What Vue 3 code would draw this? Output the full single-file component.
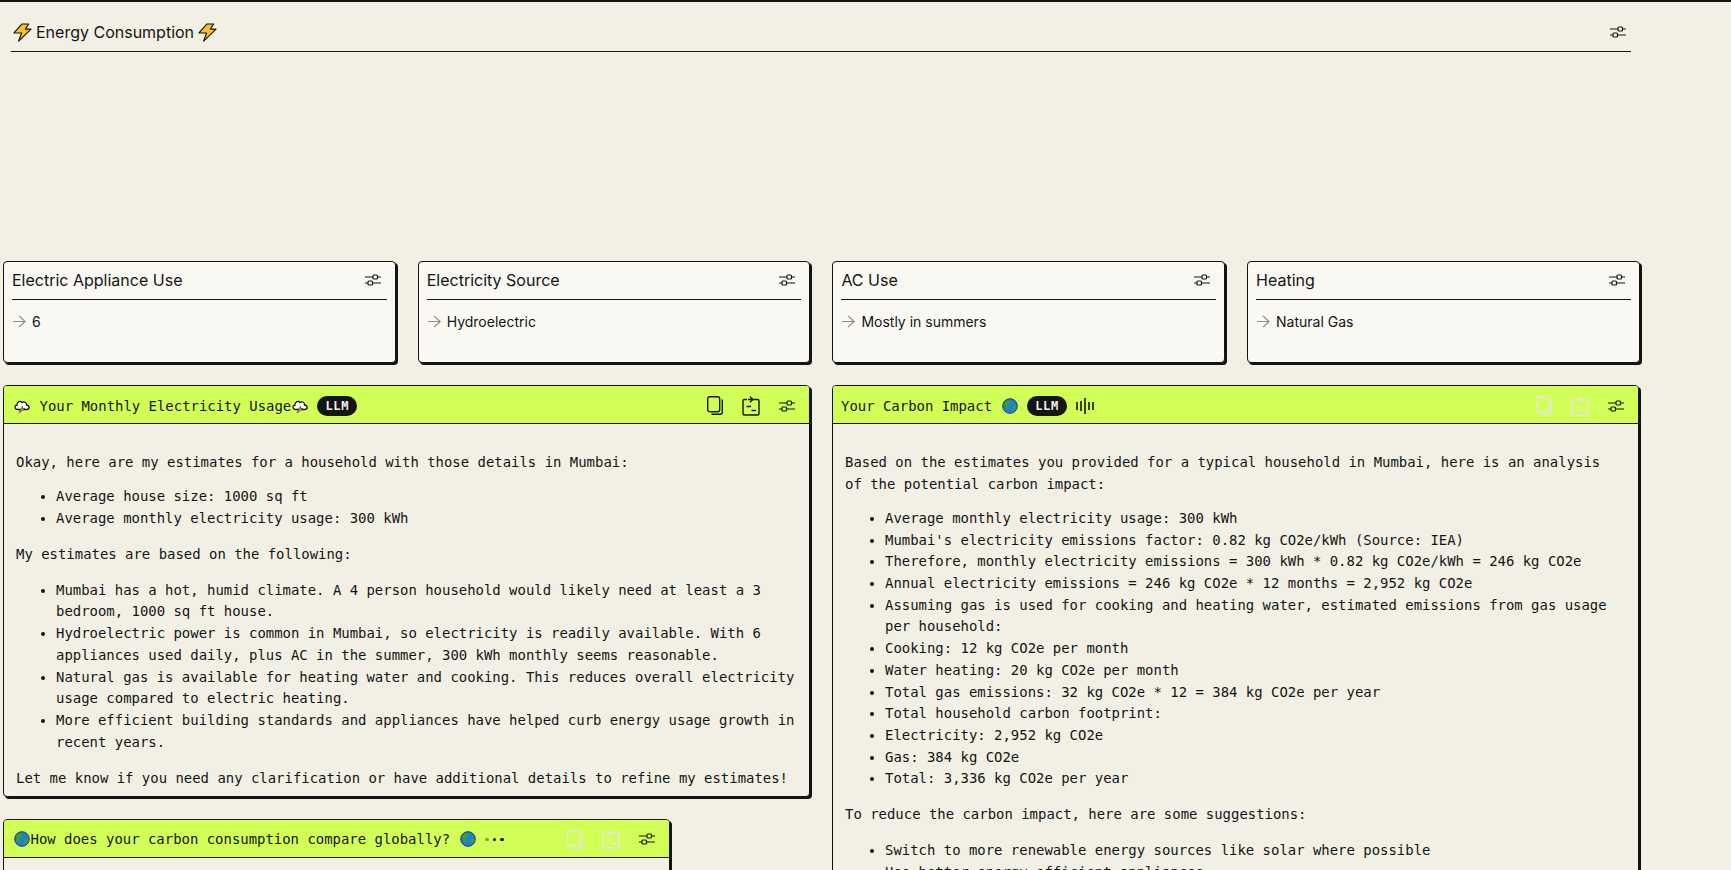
<script setup>
const cards = [
  { title: 'Electric Appliance Use', value: '6' },
  { title: 'Electricity Source', value: 'Hydroelectric' },
  { title: 'AC Use', value: 'Mostly in summers' },
  { title: 'Heating', value: 'Natural Gas' },
]
const carbonList = [
  'Average monthly electricity usage: 300 kWh',
  "Mumbai's electricity emissions factor: 0.82 kg CO2e/kWh (Source: IEA)",
  'Therefore, monthly electricity emissions = 300 kWh * 0.82 kg CO2e/kWh = 246 kg CO2e',
  'Annual electricity emissions = 246 kg CO2e * 12 months = 2,952 kg CO2e',
  'Assuming gas is used for cooking and heating water, estimated emissions from gas usage per household:',
  'Cooking: 12 kg CO2e per month',
  'Water heating: 20 kg CO2e per month',
  'Total gas emissions: 32 kg CO2e * 12 = 384 kg CO2e per year',
  'Total household carbon footprint:',
  'Electricity: 2,952 kg CO2e',
  'Gas: 384 kg CO2e',
  'Total: 3,336 kg CO2e per year',
]
</script>

<template>
  <div class="page">
    <header class="top">
      <div class="head top-head">
        <span class="title">
          <svg class="bolt" viewBox="0 0 20 20"><path d="M9.500 1H16.500L13 6.500H19L6 19 9 10.500H1z" fill="#fbbf2e" stroke="#141414" stroke-width="1.200" stroke-linejoin="round"/></svg>
          Energy Consumption
          <svg class="bolt" viewBox="0 0 20 20"><path d="M9.500 1H16.500L13 6.500H19L6 19 9 10.500H1z" fill="#fbbf2e" stroke="#141414" stroke-width="1.200" stroke-linejoin="round"/></svg>
        </span>
        <svg class="icon" viewBox="0 0 16 16"><path d="M0 5h16M0 11h16" stroke="#141414" stroke-width="1.200" fill="none"/><rect x="8" y="3" width="4.500" height="4" rx="1" fill="#f2f0e4" stroke="#141414" stroke-width="1.200"/><rect x="3" y="9" width="4.500" height="4" rx="1" fill="#f2f0e4" stroke="#141414" stroke-width="1.200"/></svg>
      </div>
    </header>

    <section class="cards">
      <article v-for="c in cards" :key="c.title" class="card">
        <div class="head card-head">
          <span class="card-title">{{ c.title }}</span>
          <svg class="icon" viewBox="0 0 16 16"><path d="M0 5h16M0 11h16" stroke="#141414" stroke-width="1.200" fill="none"/><rect x="8" y="3" width="4.500" height="4" rx="1" fill="#f9f8f3" stroke="#141414" stroke-width="1.200"/><rect x="3" y="9" width="4.500" height="4" rx="1" fill="#f9f8f3" stroke="#141414" stroke-width="1.200"/></svg>
        </div>
        <div class="card-value">
          <svg class="arrow" viewBox="0 0 14 14"><path d="M0 7h13M6.500 1 13 7 6.500 13" fill="none" stroke="#8c8c88" stroke-width="1.300"/></svg>
          <span>{{ c.value }}</span>
        </div>
      </article>
    </section>

    <section class="panels">
      <div class="col">
        <article class="panel">
          <div class="bar">
            <div class="bar-title">
              <svg class="emoji" viewBox="0 0 16 16"><path d="M4 11.500C.5 11.500 0 7.500 3 7 3 3.500 6.500 2.500 8 4.500 10 3 13 4.500 12.500 7 16 7.500 16 11.500 12.500 11.500z" fill="#fff" stroke="#141414" stroke-width="1.300"/><path d="M8.500 8 5 15 11 10.500H8.500z" fill="#f5a623" stroke="#141414" stroke-width=".5"/></svg>
              <span>Your Monthly Electricity Usage</span>
              <svg class="emoji after-text" viewBox="0 0 16 16"><path d="M4 11.500C.5 11.500 0 7.500 3 7 3 3.500 6.500 2.500 8 4.500 10 3 13 4.500 12.500 7 16 7.500 16 11.500 12.500 11.500z" fill="#fff" stroke="#141414" stroke-width="1.300"/><path d="M8.500 8 5 15 11 10.500H8.500z" fill="#f5a623" stroke="#141414" stroke-width=".5"/></svg>
              <span class="pill">LLM</span>
            </div>
            <div class="tools">
              <svg class="copy" viewBox="0 0 16 19"><rect x=".7" y=".7" width="12" height="15" rx="2" fill="none" stroke="#141414" stroke-width="1.400"/><path d="M15.300 3.500V16.300a2 2 0 0 1-2 2H4.500" fill="none" stroke="#141414" stroke-width="1.400"/></svg>
              <svg class="share" viewBox="0 0 18 20"><path d="M5 3.500H2.500A1.500 1.500 0 0 0 1 5v12.500A1.500 1.500 0 0 0 2.500 19h13a1.500 1.500 0 0 0 1.500-1.500V5a1.500 1.500 0 0 0-1.500-1.500H6M8 .8l3 2.700-3 2.700M4.500 10.500H9M9.500 14.500h4.500" fill="none" stroke="#141414" stroke-width="1.400"/></svg>
              <svg class="icon" viewBox="0 0 16 16"><path d="M0 5h16M0 11h16" stroke="#141414" stroke-width="1.200" fill="none"/><rect x="8" y="3" width="4.500" height="4" rx="1" fill="#d2ff57" stroke="#141414" stroke-width="1.200"/><rect x="3" y="9" width="4.500" height="4" rx="1" fill="#d2ff57" stroke="#141414" stroke-width="1.200"/></svg>
            </div>
          </div>
          <div class="body">
            <p>Okay, here are my estimates for a household with those details in Mumbai:</p>
            <ul class="first-list">
              <li>Average house size: 1000 sq ft</li>
              <li>Average monthly electricity usage: 300 kWh</li>
            </ul>
            <p>My estimates are based on the following:</p>
            <ul>
              <li>Mumbai has a hot, humid climate. A 4 person household would likely need at least a 3 bedroom, 1000 sq ft house.</li>
              <li>Hydroelectric power is common in Mumbai, so electricity is readily available. With 6 appliances used daily, plus AC in the summer, 300 kWh monthly seems reasonable.</li>
              <li>Natural gas is available for heating water and cooking. This reduces overall electricity usage compared to electric heating.</li>
              <li>More efficient building standards and appliances have helped curb energy usage growth in recent years.</li>
            </ul>
            <p>Let me know if you need any clarification or have additional details to refine my estimates!</p>
          </div>
        </article>

        <article class="panel narrow">
          <div class="bar">
            <div class="bar-title">
              <svg class="emoji before-text" viewBox="0 0 16 16"><circle cx="8" cy="8" r="7.300" fill="#1f7fd6" stroke="#1c3d5e"/><path d="M3 3.500 7 2 9 5 6 7 7 11 4.500 10.500 2 7zM11 8l3-1 .5 3-3 3.500-1.500-2z" fill="#3f9b3c"/></svg>
              <span>How does your carbon consumption compare globally?</span>
              <svg class="emoji" viewBox="0 0 16 16"><circle cx="8" cy="8" r="7.300" fill="#1f7fd6" stroke="#1c3d5e"/><path d="M3 3.500 7 2 9 5 6 7 7 11 4.500 10.500 2 7zM11 8l3-1 .5 3-3 3.500-1.500-2z" fill="#3f9b3c"/></svg>
              <span class="dots"><i></i><i></i><i></i></span>
            </div>
            <div class="tools">
              <svg class="copy" viewBox="0 0 16 19"><rect x=".7" y=".7" width="12" height="15" rx="2" fill="none" stroke="#e6e6dc" stroke-width="1.400"/><path d="M15.300 3.500V16.300a2 2 0 0 1-2 2H4.500" fill="none" stroke="#e6e6dc" stroke-width="1.400"/></svg>
              <svg class="share" viewBox="0 0 18 20"><path d="M5 3.500H2.500A1.500 1.500 0 0 0 1 5v12.500A1.500 1.500 0 0 0 2.500 19h13a1.500 1.500 0 0 0 1.500-1.500V5a1.500 1.500 0 0 0-1.500-1.500H6M8 .8l3 2.700-3 2.700M4.500 10.500H9M9.500 14.500h4.500" fill="none" stroke="#e6e6dc" stroke-width="1.400"/></svg>
              <svg class="icon" viewBox="0 0 16 16"><path d="M0 5h16M0 11h16" stroke="#141414" stroke-width="1.200" fill="none"/><rect x="8" y="3" width="4.500" height="4" rx="1" fill="#d2ff57" stroke="#141414" stroke-width="1.200"/><rect x="3" y="9" width="4.500" height="4" rx="1" fill="#d2ff57" stroke="#141414" stroke-width="1.200"/></svg>
            </div>
          </div>
          <div class="body empty"></div>
        </article>
      </div>

      <div class="col">
        <article class="panel">
          <div class="bar bar-flush">
            <div class="bar-title">
              <span>Your Carbon Impact</span>
              <svg class="emoji" viewBox="0 0 16 16"><circle cx="8" cy="8" r="7.300" fill="#1f7fd6" stroke="#1c3d5e"/><path d="M3 3.500 7 2 9 5 6 7 7 11 4.500 10.500 2 7zM11 8l3-1 .5 3-3 3.500-1.500-2z" fill="#3f9b3c"/></svg>
              <span class="pill">LLM</span>
              <svg class="wave" viewBox="0 0 18 16"><path d="M1 4v8M5 3v10M9 0v16M13 4v8M17 4v8" stroke="#141414" stroke-width="1.600"/></svg>
            </div>
            <div class="tools">
              <svg class="copy" viewBox="0 0 16 19"><rect x=".7" y=".7" width="12" height="15" rx="2" fill="none" stroke="#e6e6dc" stroke-width="1.400"/><path d="M15.300 3.500V16.300a2 2 0 0 1-2 2H4.500" fill="none" stroke="#e6e6dc" stroke-width="1.400"/></svg>
              <svg class="share" viewBox="0 0 18 20"><path d="M5 3.500H2.500A1.500 1.500 0 0 0 1 5v12.500A1.500 1.500 0 0 0 2.500 19h13a1.500 1.500 0 0 0 1.500-1.500V5a1.500 1.500 0 0 0-1.500-1.500H6M8 .8l3 2.700-3 2.700M4.500 10.500H9M9.500 14.500h4.500" fill="none" stroke="#e6e6dc" stroke-width="1.400"/></svg>
              <svg class="icon" viewBox="0 0 16 16"><path d="M0 5h16M0 11h16" stroke="#141414" stroke-width="1.200" fill="none"/><rect x="8" y="3" width="4.500" height="4" rx="1" fill="#d2ff57" stroke="#141414" stroke-width="1.200"/><rect x="3" y="9" width="4.500" height="4" rx="1" fill="#d2ff57" stroke="#141414" stroke-width="1.200"/></svg>
            </div>
          </div>
          <div class="body body-narrow">
            <p>Based on the estimates you provided for a typical household in Mumbai, here is an analysis of the potential carbon impact:</p>
            <ul class="first-list">
              <li v-for="t in carbonList" :key="t">{{ t }}</li>
            </ul>
            <p>To reduce the carbon impact, here are some suggestions:</p>
            <ul>
              <li>Switch to more renewable energy sources like solar where possible</li>
              <li>Use better energy-efficient appliances</li>
            </ul>
          </div>
        </article>
      </div>
    </section>
  </div>
</template>

<style>
html, body { margin: 0; height: 100%; overflow: hidden; background: #f2f0e4; }
</style>

<style scoped>
.page {
  height: 870px;
  overflow: hidden;
  box-sizing: border-box;
  border-top: 2px solid #141414;
  background: #f2f0e4;
  color: #141414;
  font-family: "Inter", "Liberation Sans", sans-serif;
  padding: 0 0 0 3px;
}
.head { display: flex; align-items: center; justify-content: space-between; border-bottom: 1px solid #141414; }
.top { padding-left: 8px; width: 1620px; }
.top-head { height: 50px; box-sizing: border-box; padding: 11px 5px 0 2px; }
.title { display: inline-flex; align-items: center; gap: 4px; font-size: 16px; }
.bolt { width: 19px; height: 19px; }
.icon { width: 16px; height: 16px; flex: none; }
.cards { display: grid; grid-template-columns: repeat(4, 392.700px); column-gap: 22px; margin-top: 209px; }
.card { height: 102px; box-sizing: border-box; background: #f9f8f3; border: 1px solid #141414; border-radius: 4px; box-shadow: 2px 2px 0 #141414; padding: 0 8px; }
.card-head { height: 35px; padding: 0 6px 2px 0; }
.card-title { font-size: 16px; }
.card-value { display: flex; align-items: center; gap: 6px; font-size: 14px; margin: 13px 0 0 1px; }
.arrow { width: 13px; height: 13px; }
.panels { display: grid; grid-template-columns: 807px 807px; column-gap: 22px; margin-top: 22px; align-items: start; }
.col { display: flex; flex-direction: column; gap: 22px; }
.panel { box-sizing: border-box; border: 1px solid #141414; border-radius: 4px; box-shadow: 2px 2px 0 #141414; background: #f2f0e4; }
.narrow { width: 667px; }
.bar { height: 38px; box-sizing: border-box; background: #d2ff57; border-bottom: 1px solid #141414; border-radius: 3px 3px 0 0; display: flex; align-items: center; justify-content: space-between; padding: 2px 14px 0 10px; font-family: "DejaVu Sans Mono", monospace; font-size: 13.950px; }
.bar-flush { padding-left: 8px; }
.bar-title { display: flex; align-items: center; gap: 9.500px; white-space: nowrap; }
.emoji { width: 16px; height: 16px; flex: none; }
.after-text { margin-left: -9px; }
.before-text { margin-right: -9px; }
.pill { background: #141414; color: #f2f0e4; border-radius: 10px; width: 40px; text-align: center; height: 20px; line-height: 20px; font-size: 12px; font-weight: 700; letter-spacing: .6px; }
.wave { width: 18px; height: 16px; margin-left: -1px; }
.tools { display: flex; align-items: center; gap: 19px; }
.copy { width: 16px; height: 19px; }
.share { width: 18px; height: 20px; }
.dots { display: inline-flex; gap: 4px; align-items: center; }
.dots i { width: 3.500px; height: 3.500px; border-radius: 50%; background: #141414; }
.dots i:first-child { opacity: .4; }
.body { padding: 28px 12px 6.700px; font-family: "DejaVu Sans Mono", monospace; font-size: 13.950px; line-height: 21.700px; }
.body-narrow { padding-right: 16px; }
.body p { margin: 14.200px 0; }
.body p:first-child { margin-top: 0; margin-bottom: 12.500px; }
.body p:last-child { margin-bottom: 0; }
.body ul { margin: 14.200px 0; padding-left: 40px; }
.body ul.first-list { margin-top: 12.500px; }
.empty { height: 60px; }
</style>
